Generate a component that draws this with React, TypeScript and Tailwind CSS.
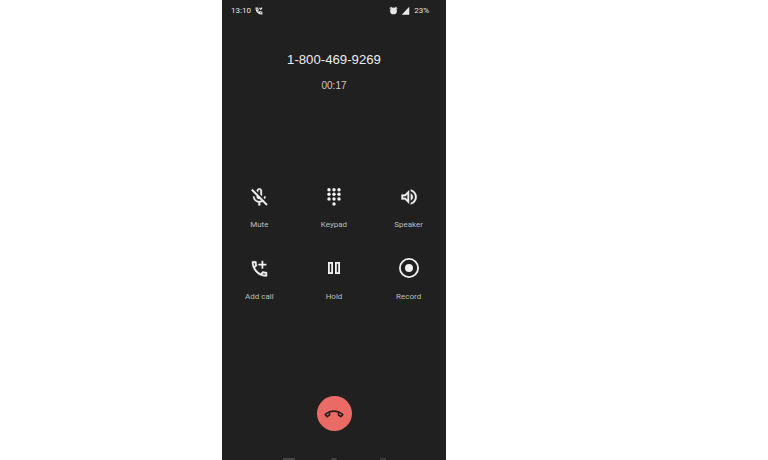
import React from 'react';

const MuteIcon = () => (
  <svg width="24" height="24" viewBox="0 0 24 24" fill="#f1f1f1" stroke="#f1f1f1" strokeWidth=".3">
    <g transform="translate(1.500 2.500) scale(.9)">
      <path d="M10.800 4.900c0-.660.540-1.200 1.200-1.200s1.200.540 1.200 1.200l-.010 3.910L15 10.600V5c0-1.660-1.340-3-3-3-1.540 0-2.790 1.160-2.960 2.650l1.760 1.760V4.900zM19 11h-1.700c0 .580-.100 1.130-.270 1.640l1.270 1.270c.440-.880.700-1.870.700-2.910zM4.410 2.860L3 4.270l6 6V11c0 1.660 1.340 3 3 3 .230 0 .440-.030.650-.080l1.660 1.660c-.710.330-1.500.520-2.310.520-2.760 0-5.300-2.100-5.300-5.100H5c0 3.410 2.720 6.230 6 6.720V21h2v-3.280c.910-.130 1.770-.450 2.530-.900l4.200 4.200 1.410-1.410L4.410 2.860z" />
    </g>
  </svg>
);

const KeypadIcon = () => (
  <svg width="24" height="24" viewBox="0 0 24 24" fill="#f1f1f1">
    {[5.700, 10.300, 15].map((y) =>
      [7, 12, 17].map((x) => <circle key={`${x}-${y}`} cx={x} cy={y} r="1.700" />),
    )}
    <circle cx="12" cy="20" r="1.700" />
  </svg>
);

const SpeakerIcon = () => (
  <svg width="24" height="24" viewBox="0 0 24 24" fill="#f1f1f1" stroke="#f1f1f1" strokeWidth=".3">
    <g transform="translate(1.900 2.800) scale(.85)">
      <path d="M3 9v6h4l5 5V4L7 9H3zm7-.170v6.340L7.830 13H5v-2h2.830L10 8.830zM16.500 12c0-1.770-1.020-3.290-2.500-4.030v8.050c1.480-.730 2.500-2.250 2.500-4.020zM14 3.230v2.060c2.890.860 5 3.540 5 6.710s-2.110 5.850-5 6.710v2.060c4.010-.910 7-4.490 7-8.770 0-4.280-2.990-7.860-7-8.770z" />
    </g>
  </svg>
);

const AddCallIcon = () => (
  <svg width="24" height="24" viewBox="0 0 24 24" fill="#f1f1f1" stroke="#f1f1f1" strokeWidth=".3">
    <g transform="translate(2.300 2.700) scale(.85)">
      <path d="M6.540 5c.06.89.21 1.760.45 2.590l-1.200 1.200c-.410-1.200-.670-2.470-.760-3.790h1.510m9.860 12.020c.850.240 1.720.390 2.600.450v1.490c-1.320-.090-2.590-.350-3.800-.750l1.200-1.190M7.500 3H4c-.550 0-1 .450-1 1 0 9.390 7.610 17 17 17 .550 0 1-.450 1-1v-3.490c0-.550-.450-1-1-1-1.240 0-2.450-.200-3.570-.570-.100-.040-.210-.050-.310-.050-.260 0-.510.100-.710.290l-2.200 2.200c-2.830-1.450-5.150-3.760-6.590-6.590l2.200-2.200c.280-.280.360-.670.250-1.020C8.700 6.450 8.500 5.250 8.500 4c0-.550-.450-1-1-1z" />
    </g>
    <path d="M15.400 4.700v8M11.400 8.700h8" stroke="#f1f1f1" strokeWidth="1.800" fill="none" />
  </svg>
);

const HoldIcon = () => (
  <svg width="24" height="24" viewBox="0 0 24 24" fill="none" stroke="#f1f1f1" strokeWidth="1.800">
    <rect x="6.900" y="6.900" width="3.200" height="10.200" />
    <rect x="13.900" y="6.900" width="3.200" height="10.200" />
  </svg>
);

const RecordIcon = () => (
  <svg width="24" height="24" viewBox="0 0 24 24" fill="none">
    <circle cx="12" cy="12" r="9.100" stroke="#f1f1f1" strokeWidth="1.800" />
    <circle cx="12" cy="12" r="4" fill="#f1f1f1" />
  </svg>
);

const HangupIcon = () => (
  <svg width="24" height="24" viewBox="0 0 24 24" fill="#2a1c1c">
    <g transform="translate(2.400 2.700) scale(.8)">
      <path d="M18.590 10.520c1.050.510 2.040 1.150 2.950 1.900l-1.070 1.070c-.580-.470-1.210-.890-1.880-1.250v-1.720m-13.180 0v1.710c-.650.350-1.280.770-1.870 1.260l-1.070-1.070c.900-.750 1.890-1.390 2.940-1.900M12 7C7.460 7 3.340 8.780.29 11.670c-.180.180-.290.430-.290.710s.110.530.290.710l2.480 2.480c.180.180.430.290.710.290.270 0 .520-.110.700-.280.790-.740 1.690-1.360 2.660-1.850.330-.160.560-.500.560-.900v-3.100C8.850 9.250 10.400 9 12 9s3.150.250 4.600.730v3.100c0 .390.230.740.560.900.980.490 1.870 1.120 2.670 1.850.180.180.430.280.700.280.280 0 .530-.110.710-.290l2.480-2.480c.180-.180.290-.430.290-.710s-.110-.530-.290-.710C20.660 8.780 16.540 7 12 7z" />
    </g>
  </svg>
);

const buttons = [
  { label: 'Mute', icon: <MuteIcon /> },
  { label: 'Keypad', icon: <KeypadIcon /> },
  { label: 'Speaker', icon: <SpeakerIcon /> },
  { label: 'Add call', icon: <AddCallIcon /> },
  { label: 'Hold', icon: <HoldIcon /> },
  { label: 'Record', icon: <RecordIcon /> },
];

export default function App() {
  return (
    <div className="h-[460px] w-[768px] overflow-hidden bg-white font-['Roboto',sans-serif]">
      <div className="ml-[222px] flex h-[460px] w-[224px] flex-col items-center bg-[#202020]">
        {/* Barra de status */}
        <div className="flex h-[21px] w-full items-center justify-between pl-[9px] pr-[17px] text-[8px] text-[#e4e4e4]">
          <div className="flex items-center gap-[4px]">
            <span>13:10</span>
            <svg width="8" height="8" viewBox="0 0 24 24" fill="none" stroke="#e4e4e4" strokeWidth="3.500">
              <path d="M3 3h5l1.500 6-3 2c1.500 3 3.500 5 6 6l2-3 6 1.500V21C11 21 3 13 3 3z" />
              <path d="M14 2l3 6M21 2l-4 6" />
            </svg>
          </div>
          <div className="flex items-center gap-[3px]">
            <svg width="9" height="9" viewBox="0 0 24 24" fill="#e8e8e8">
              <circle cx="12" cy="13" r="9" />
              <path d="M1 6l5-4 2 2-5 4zM23 6l-5-4-2 2 5 4z" />
            </svg>
            <svg width="9" height="9" viewBox="0 0 24 24" fill="#e8e8e8">
              <path d="M2 23L22 2v21z" />
            </svg>
            <span className="ml-[1px]">23%</span>
          </div>
        </div>

        <div className="mt-[29px] font-['Liberation_Sans',sans-serif] text-[13.200px] leading-[20px] text-[#ececec]">1-800-469-9269</div>
        <div className="mt-[9px] font-['Liberation_Sans',sans-serif] text-[10px] leading-[14px] text-[#cccccc]">00:17</div>

        {/* Botoes da chamada */}
        <div className="mt-[91px] grid w-full grid-cols-3 gap-y-[26px]">
          {buttons.map((b) => (
            <div key={b.label} className="flex flex-col items-center">
              {b.icon}
              <span className="mt-[12px] text-[8px] leading-[10px] text-[#bdbdbd]">{b.label}</span>
            </div>
          ))}
        </div>

        <button className="mt-[94px] flex h-[35px] w-[35px] items-center justify-center rounded-full bg-[#ea6b66]">
          <HangupIcon />
        </button>

        {/* Icones da barra de navegacao, cortados pela borda */}
        <div className="mt-[27px] flex w-full pl-[61px]">
          <div className="h-[2px] w-[12px] bg-[#444444]" />
          <div className="ml-[36px] h-[2px] w-[6px] rounded-t-full bg-[#444444]" />
          <div className="ml-[43px] h-[2px] w-[6px] bg-[#3c3c3c]" />
        </div>
      </div>
    </div>
  );
}
